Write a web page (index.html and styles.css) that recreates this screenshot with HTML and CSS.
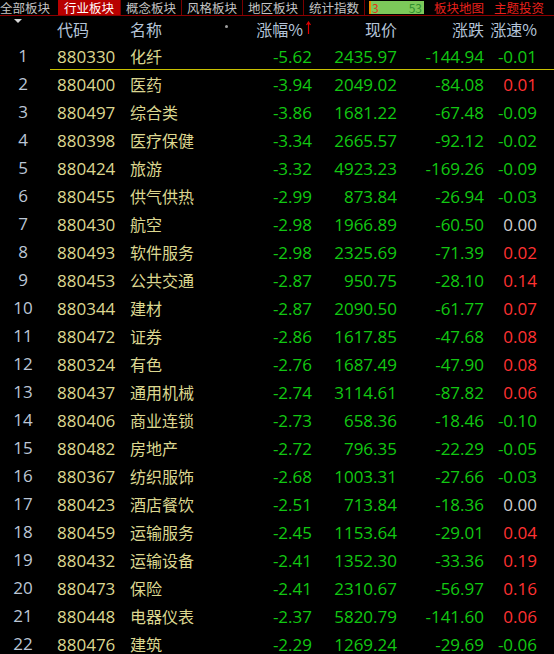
FILE: index.html
```html
<!DOCTYPE html>
<html lang="zh-CN">
<head>
<meta charset="UTF-8">
<meta name="viewport" content="width=device-width, initial-scale=1.0">
<title>行业板块</title>
<link rel="stylesheet" href="styles.css">
</head>
<body>
<div id="board">
    <nav class="tabs">
        <span class="tab first">全部板块</span>
        <span class="tab active">行业板块</span>
        <span class="tab">概念板块</span>
        <span class="tab">风格板块</span>
        <span class="tab">地区板块</span>
        <span class="tab">统计指数</span>
        <span class="ratio"><span class="up">3</span><span class="down">53</span></span>
        <span class="link">板块地图</span>
        <span class="link">主题投资</span>
    </nav>
    <div class="row head">
        <span class="idx"><i class="sort-tri"></i></span>
        <span class="code">代码</span>
        <span class="name">名称<i class="dot"></i></span>
        <span class="num chg">涨幅%<svg class="arrow" width="5" height="13" viewBox="0 0 5 13"><path d="M2.5 1 L2.5 13 M0.5 4 L2.5 1 L4.5 4" stroke="#e00000" stroke-width="1.2" fill="none"/></svg></span>
        <span class="num">现价</span>
        <span class="num">涨跌</span>
        <span class="num speed">涨速%</span>
    </div>
    <div id="rows"></div>
</div>
<script>
const sectors = [
    ['880330', '化纤', '-5.62', '2435.97', '-144.94', '-0.01'],
    ['880400', '医药', '-3.94', '2049.02', '-84.08', '0.01'],
    ['880497', '综合类', '-3.86', '1681.22', '-67.48', '-0.09'],
    ['880398', '医疗保健', '-3.34', '2665.57', '-92.12', '-0.02'],
    ['880424', '旅游', '-3.32', '4923.23', '-169.26', '-0.09'],
    ['880455', '供气供热', '-2.99', '873.84', '-26.94', '-0.03'],
    ['880430', '航空', '-2.98', '1966.89', '-60.50', '0.00'],
    ['880493', '软件服务', '-2.98', '2325.69', '-71.39', '0.02'],
    ['880453', '公共交通', '-2.87', '950.75', '-28.10', '0.14'],
    ['880344', '建材', '-2.87', '2090.50', '-61.77', '0.07'],
    ['880472', '证券', '-2.86', '1617.85', '-47.68', '0.08'],
    ['880324', '有色', '-2.76', '1687.49', '-47.90', '0.08'],
    ['880437', '通用机械', '-2.74', '3114.61', '-87.82', '0.06'],
    ['880406', '商业连锁', '-2.73', '658.36', '-18.46', '-0.10'],
    ['880482', '房地产', '-2.72', '796.35', '-22.29', '-0.05'],
    ['880367', '纺织服饰', '-2.68', '1003.31', '-27.66', '-0.03'],
    ['880423', '酒店餐饮', '-2.51', '713.84', '-18.36', '0.00'],
    ['880459', '运输服务', '-2.45', '1153.64', '-29.01', '0.04'],
    ['880432', '运输设备', '-2.41', '1352.30', '-33.36', '0.19'],
    ['880473', '保险', '-2.41', '2310.67', '-56.97', '0.16'],
    ['880448', '电器仪表', '-2.37', '5820.79', '-141.60', '0.06'],
    ['880476', '建筑', '-2.29', '1269.24', '-29.69', '-0.06']
];

function tone(value) {
    const v = parseFloat(value);
    if (v > 0) return 'rise';
    if (v < 0) return 'fall';
    return 'flat';
}

function renderRows() {
    const container = document.getElementById('rows');
    sectors.forEach((s, i) => {
        const row = document.createElement('div');
        row.className = 'row' + (i === 0 ? ' selected' : '');
        row.innerHTML = `
            <span class="idx">${i + 1}</span>
            <span class="code">${s[0]}</span>
            <span class="name">${s[1]}</span>
            <span class="num ${tone(s[2])}">${s[2]}</span>
            <span class="num ${tone(s[4])}">${s[3]}</span>
            <span class="num ${tone(s[4])}">${s[4]}</span>
            <span class="num speed ${tone(s[5])}">${s[5]}</span>
        `;
        container.appendChild(row);
    });
}

renderRows();
</script>
</body>
</html>
```
FILE: styles.css
```css
body {
    margin: 0;
    padding: 0;
    background-color: #000;
    font-family: "Open Sans", "Noto Sans CJK SC", sans-serif;
    overflow: hidden;
}
#board {
    width: 554px;
    height: 654px;
    overflow: hidden;
}
.tabs {
    display: flex;
    align-items: center;
    height: 15px;
    border-bottom: 1px solid #8a0000;
    font-family: "Noto Sans CJK SC", sans-serif;
    font-size: 12.5px;
    line-height: 15px;
    color: #c4c4c4;
}
.tab {
    width: 60px;
    height: 15px;
    text-align: center;
    border-right: 1px solid #7a0000;
    white-space: nowrap;
}
.tab.first {
    width: 57px;
    margin-right: 1px;
    border-right: none;
    text-align: left;
}
.tab.active {
    background-color: #b80000;
    color: #fff;
    width: 62px;
}
.ratio {
    display: flex;
    justify-content: space-between;
    align-items: center;
    width: 51px;
    height: 13px;
    margin-left: 4px;
    padding-right: 2px;
    background-color: #7cc95a;
    border-left: 2px solid #f08a00;
    font-size: 12px;
    line-height: 13px;
}
.ratio .up {
    color: #e0341a;
    padding-left: 1px;
}
.ratio .down {
    color: #2f8f2f;
}
.link {
    color: #e8201c;
    margin-left: 10px;
}
.row {
    display: grid;
    grid-template-columns: 46px 84px 120px 62px 85px 87px 54px;
    align-items: center;
    height: 28px;
    font-size: 17px;
    white-space: nowrap;
}
.row.head {
    height: 26px;
    color: #b4c4d8;
    font-family: "Noto Sans CJK SC", sans-serif;
    font-size: 16px;
}
.row.selected {
    background-image: linear-gradient(#c8c000, #c8c000);
    background-size: calc(100% - 50px) 1px;
    background-position: 50px 100%;
    background-repeat: no-repeat;
}
.idx {
    text-align: center;
    color: #bcc6d6;
    position: relative;
    height: 100%;
}
.row:not(.head) .idx {
    line-height: 28px;
}
.code {
    padding-left: 11px;
    color: #dcd790;
}
.head .code {
    color: #b4c4d8;
}
.name {
    position: relative;
    color: #dcd790;
    font-family: "Noto Sans CJK SC", sans-serif;
    font-size: 16px;
}
.head .name {
    color: #b4c4d8;
}
.num {
    text-align: right;
}
.num.speed {
    padding-right: 1px;
}
.head .chg {
    display: flex;
    justify-content: flex-end;
    align-items: center;
    gap: 3px;
    padding-right: 1px;
}
.arrow {
    display: block;
    margin-top: -3px;
}
.sort-tri {
    position: absolute;
    left: 14px;
    top: 3px;
    width: 0;
    height: 0;
    border-left: 4px solid transparent;
    border-right: 4px solid transparent;
    border-top: 4px solid #d8d8d8;
}
.dot {
    position: absolute;
    left: 95px;
    top: 8px;
    width: 3px;
    height: 3px;
    border-radius: 50%;
    background-color: #a0a0a0;
}
.rise {
    color: #ff3232;
}
.fall {
    color: #12c812;
}
.flat {
    color: #d0d0d0;
}
```
